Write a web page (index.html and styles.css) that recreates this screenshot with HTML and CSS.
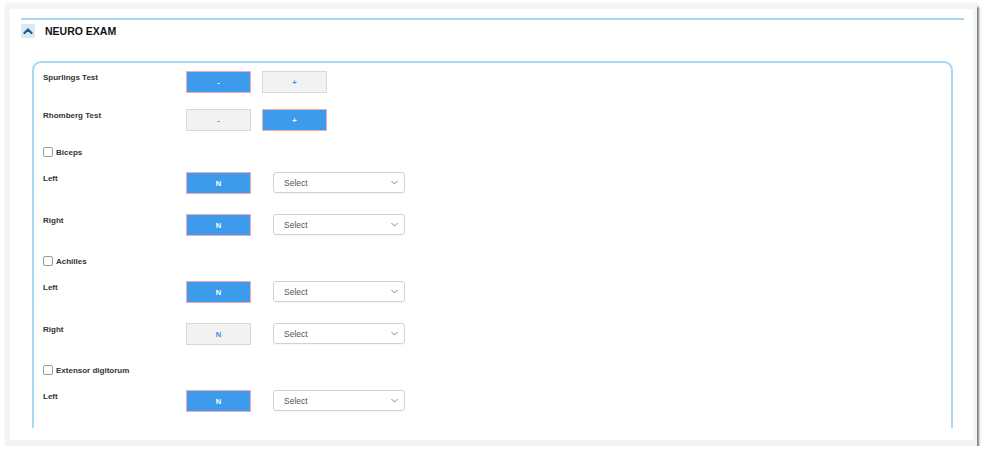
FILE: index.html
```html
<!DOCTYPE html>
<html>
<head>
<meta charset="utf-8">
<title>Neuro Exam</title>
<link rel="stylesheet" href="styles.css">
</head>
<body>
<div class="window">
  <div class="panel">
    <div class="section">
      <div class="section-head">
        <span class="toggle">
          <svg width="10" height="8" viewBox="0 0 10 8"><polyline points="1.5,6 5,2.5 8.5,6" fill="none" stroke="#2c5b82" stroke-width="2.2" stroke-linecap="round" stroke-linejoin="round"/></svg>
        </span>
        <span class="title">NEURO EXAM</span>
      </div>
      <div class="scroll">
        <div class="card">
          <div class="row test">
            <div class="label">Spurlings Test</div>
            <div class="btns">
              <button class="btn on">-</button>
              <button class="btn off">+</button>
            </div>
          </div>
          <div class="row test">
            <div class="label">Rhomberg Test</div>
            <div class="btns">
              <button class="btn off">-</button>
              <button class="btn on">+</button>
            </div>
          </div>

          <div class="group">
            <label class="check"><span class="box"></span>Biceps</label>
            <div class="row side">
              <div class="label">Left</div>
              <button class="btn on">N</button>
              <div class="select">Select<svg class="caret" width="7" height="5" viewBox="0 0 7 5"><polyline points="0.5,1 3.5,4 6.5,1" fill="none" stroke="#777" stroke-width="0.9"/></svg></div>
            </div>
            <div class="row side">
              <div class="label">Right</div>
              <button class="btn on">N</button>
              <div class="select">Select<svg class="caret" width="7" height="5" viewBox="0 0 7 5"><polyline points="0.5,1 3.5,4 6.5,1" fill="none" stroke="#777" stroke-width="0.9"/></svg></div>
            </div>
          </div>

          <div class="group">
            <label class="check"><span class="box"></span>Achilles</label>
            <div class="row side">
              <div class="label">Left</div>
              <button class="btn on">N</button>
              <div class="select">Select<svg class="caret" width="7" height="5" viewBox="0 0 7 5"><polyline points="0.5,1 3.5,4 6.5,1" fill="none" stroke="#777" stroke-width="0.9"/></svg></div>
            </div>
            <div class="row side">
              <div class="label">Right</div>
              <button class="btn off">N</button>
              <div class="select">Select<svg class="caret" width="7" height="5" viewBox="0 0 7 5"><polyline points="0.5,1 3.5,4 6.5,1" fill="none" stroke="#777" stroke-width="0.9"/></svg></div>
            </div>
          </div>

          <div class="group">
            <label class="check"><span class="box"></span>Extensor digitorum</label>
            <div class="row side">
              <div class="label">Left</div>
              <button class="btn on">N</button>
              <div class="select">Select<svg class="caret" width="7" height="5" viewBox="0 0 7 5"><polyline points="0.5,1 3.5,4 6.5,1" fill="none" stroke="#777" stroke-width="0.9"/></svg></div>
            </div>
          </div>
        </div>
      </div>
    </div>
  </div>
</div>
</body>
</html>
```
FILE: styles.css
```css
html, body {
  margin: 0;
  padding: 0;
  background: #ffffff;
  font-family: "Liberation Sans", Arial, sans-serif;
}

.window {
  margin: 4px 0 0 6px;
  width: 971px;
  height: 442px;
  box-sizing: border-box;
  background: #f3f5f5;
  padding: 5px 4px 6px 4px;
  box-shadow: 2px 3px 2px rgba(0, 0, 0, 0.5), 0 0 3px rgba(0, 0, 0, 0.12);
}

.panel {
  height: 100%;
  box-sizing: border-box;
  background: #ffffff;
  padding: 9px 9px 12px 11px;
  display: flex;
  flex-direction: column;
}

.section {
  flex: 1;
  min-height: 0;
  border-top: 2px solid #a6d6f3;
  display: flex;
  flex-direction: column;
}

.section-head {
  display: flex;
  align-items: center;
  gap: 10px;
  margin-top: 4px;
  height: 14px;
}

.toggle {
  width: 14px;
  height: 14px;
  background: #d8eaf6;
  display: flex;
  align-items: center;
  justify-content: center;
}

.title {
  font-size: 10.5px;
  font-weight: bold;
  color: #111;
}

.scroll {
  flex: 1;
  min-height: 0;
  margin-top: 23px;
  padding: 0 11px;
  overflow: hidden;
}

.card {
  border: 2px solid #a8d8f5;
  border-radius: 9px;
  padding: 8px 9px 40px 9px;
}

.row {
  display: flex;
  align-items: flex-start;
}

.label {
  width: 143px;
  flex: none;
  font-size: 8px;
  font-weight: bold;
  line-height: 12px;
  padding-top: 1px;
  color: #333;
}

.btns {
  display: flex;
  gap: 11px;
}

.test {
  margin-bottom: 16px;
}

.btn {
  width: 65px;
  height: 22px;
  box-sizing: border-box;
  margin: 0;
  padding: 0;
  font-family: "Liberation Sans", Arial, sans-serif;
  font-size: 7.5px;
  font-weight: bold;
  display: flex;
  align-items: center;
  justify-content: center;
}

.btn.on {
  background: #3d9bec;
  border: 1px solid #f1a8b9;
  color: #ffffff;
}

.btn.off {
  background: #f2f2f2;
  border: 1px solid #d8d8d8;
  color: #3a8be4;
}

.group {
  margin-bottom: 1px;
}

.check {
  display: flex;
  align-items: center;
  gap: 3px;
  height: 10px;
  font-size: 8px;
  font-weight: bold;
  color: #333;
  margin-bottom: 15px;
}

.box {
  width: 10px;
  height: 10px;
  box-sizing: border-box;
  border: 1px solid #9a9a9a;
  border-radius: 2px;
  background: #fff;
}

.side {
  margin-bottom: 20px;
}

.select {
  margin-left: 22px;
  width: 132px;
  height: 21px;
  box-sizing: border-box;
  border: 1px solid #d2d2d2;
  border-radius: 3px;
  box-shadow: 0 1px 1px rgba(0, 0, 0, 0.04);
  padding: 0 6px 0 10px;
  font-size: 8.5px;
  color: #555;
  display: flex;
  align-items: center;
  justify-content: space-between;
}

.caret {
  display: block;
}
```
